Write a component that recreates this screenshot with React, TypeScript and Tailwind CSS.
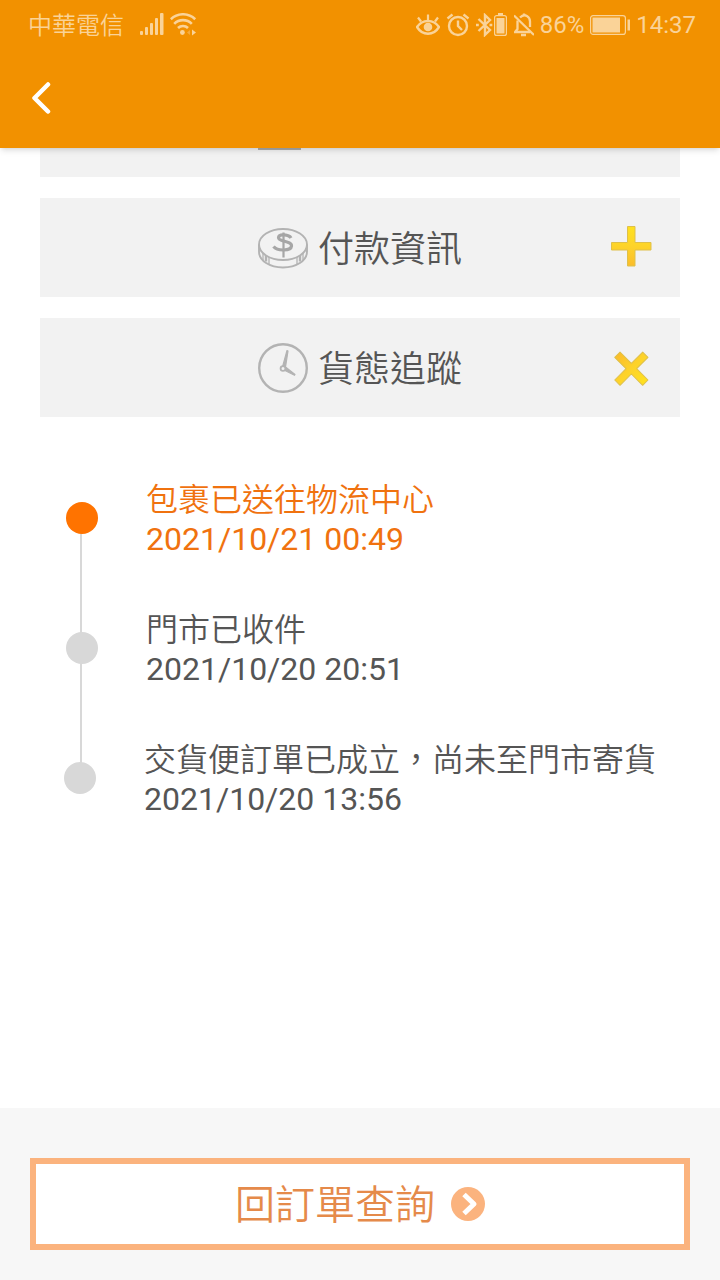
import React from 'react';

const sans = "font-[Roboto,'Noto_Sans_CJK_TC',sans-serif]";

interface TrackingEvent {
    title: string;
    time: string;
}

const events: TrackingEvent[] = [
    { title: '包裹已送往物流中心', time: '2021/10/21 00:49' },
    { title: '門市已收件', time: '2021/10/20 20:51' },
    { title: '交貨便訂單已成立，尚未至門市寄貨', time: '2021/10/20 13:56' },
];

const SignalIcon = () => (
    <svg className="h-6 w-6" viewBox="0 0 24 24" fill="currentColor">
        <rect x="0" y="18" width="3" height="4" rx="1" />
        <rect x="5" y="14" width="3" height="8" rx="1" />
        <rect x="10" y="10" width="3" height="12" rx="1" />
        <rect x="15" y="5" width="3" height="17" rx="1" />
        <rect x="20" y="0" width="3.5" height="22" rx="1" />
    </svg>
);

const WifiIcon = () => (
    <svg className="h-6 w-7" viewBox="0 0 28 24" fill="none" stroke="currentColor" strokeWidth="2.6">
        <path d="M.8 6.200a17.6 17.6 0 0 1 24.4 0" />
        <path d="M4.2 10.800a12.4 12.4 0 0 1 17.6 0" />
        <path d="M8 15a7.2 7.2 0 0 1 10 0" />
        <circle cx="12.4" cy="19.500" r="2.4" fill="currentColor" stroke="none" />
        <path d="M20 17v5l-3-2.500z" fill="currentColor" stroke="none" opacity=".4" />
        <path d="M22 16.500v6l4-3z" fill="currentColor" stroke="none" />
    </svg>
);

const EyeIcon = () => (
    <svg className="h-6 w-6" viewBox="0 0 24 24" fill="none" stroke="currentColor" strokeWidth="2.4">
        <path d="M1 14c5.500-8 16.500-8 22 0-5.500 9-16.500 9-22 0z" />
        <circle cx="12" cy="14" r="4.300" fill="currentColor" stroke="none" />
        <path d="M12 8V1.500M5 8.500 2 4.500M19 8.500l3-4" strokeWidth="2.200" />
    </svg>
);

const AlarmIcon = () => (
    <svg className="h-6 w-6" viewBox="0 0 24 24" fill="none" stroke="currentColor" strokeWidth="2.4">
        <circle cx="12" cy="13" r="9" />
        <path d="M12 7.500V13l4 4M1.500 5.500l5-4M22.500 5.500l-5-4" />
    </svg>
);

const BluetoothIcon = () => (
    <svg className="h-6 w-8" viewBox="0 0 32 24" fill="none" stroke="currentColor" strokeWidth="2.4">
        <path d="m2.500 6 11.500 11-5 4.800V2.200L14 7 2.500 18" />
        <path d="M0 12h2.800M13.500 12h2.800" strokeWidth="2.600" />
        <rect x="18.600" y="2.600" width="11.800" height="19.800" rx="2" strokeWidth="1.200" />
        <path d="M22 1h5" strokeWidth="2" />
        <rect x="20.500" y="5" width="8" height="15.500" fill="currentColor" stroke="none" />
    </svg>
);

const BellOffIcon = () => (
    <svg className="h-6 w-5" viewBox="2 0 20 24" fill="none" stroke="currentColor" strokeWidth="2.3">
        <path d="m2 2.500 20 19.500" />
        <path d="M5.500 7.500V16l-2.500 3H18M8 4.500C13-.5 18 4 18 8.500V14" />
        <path d="M12 3V.5M9 22h5" />
    </svg>
);

const BatteryIcon = () => (
    <svg className="h-6 w-10" viewBox="0 0 40 24" fill="currentColor">
        <rect x="0.600" y="2.600" width="34.800" height="18.800" rx="2.500" fill="none" stroke="currentColor" strokeWidth="1.200" />
        <rect x="2.500" y="4.500" width="27.500" height="15" />
        <path d="M37.500 6.500h2.500v11h-2.500z" />
    </svg>
);

const CoinIcon = () => (
    <svg className="h-[50px] w-[50px]" viewBox="0 0 50 50" fill="none" stroke="#b3b3b3" strokeWidth="1.9">
        <ellipse cx="25" cy="21.500" rx="24" ry="15.500" />
        <path d="M1 21.500v7C1 38 12 44.500 25 44.500S49 38 49 28.500v-7" />
        <path d="M5 30v7M11 34v7M39 34v7M45 30v7" strokeWidth="1.300" />
        <path d="M8 32.500v6M42 32.500v6" strokeWidth="2.400" />
        <path d="M33 15c-2-3.500-12-4.500-12.500-.5-.5 4.500 13.500 3 13 8.500-.5 5-14 5.500-18 .5" stroke="#a6a6a6" strokeWidth="3.200" />
        <path d="M25.500 9.500v25" stroke="#a6a6a6" strokeWidth="2.200" />
    </svg>
);

const ClockIcon = () => (
    <svg className="h-[50px] w-[50px]" viewBox="0 0 50 50" fill="none" stroke="#b3b3b3">
        <circle cx="25" cy="25" r="23.800" strokeWidth="2.400" />
        <path d="m24.500 24 4.500-16.500 1 .5-2.500 16 9.500 7.500-.5.800-10.500-5.300z" fill="#b3b3b3" strokeWidth="1.200" strokeLinejoin="round" />
        <circle cx="25" cy="25.500" r="2.400" fill="#f2f2f2" strokeWidth="1.800" />
    </svg>
);

const PlusIcon = () => (
    <svg className="mb-1 h-[42px] w-[42px]" viewBox="0 0 42 42">
        <defs>
            <linearGradient id="plusFill" x1="0" y1="0" x2="0" y2="1">
                <stop offset="0" stopColor="#ffe11f" />
                <stop offset=".5" stopColor="#fdd32a" />
                <stop offset="1" stopColor="#fbbd2b" />
            </linearGradient>
        </defs>
        <path
            d="M17.500 1.500h7.500v16h16v7.500H25v16h-7.500V25h-16v-7.500h16z"
            fill="url(#plusFill)"
            stroke="#dfc04a"
            strokeLinejoin="round"
        />
    </svg>
);

const CrossIcon = () => (
    <svg className="h-[42px] w-[42px]" viewBox="0 0 42 42">
        <defs>
            <linearGradient id="crossFill" x1="0" y1="0" x2="1" y2="0">
                <stop offset="0" stopColor="#fbbd2b" />
                <stop offset=".5" stopColor="#fdd32a" />
                <stop offset="1" stopColor="#ffe11f" />
            </linearGradient>
        </defs>
        <path
            d="M18 1.500h7.500v16h16v7.500h-16v16H18V25H2v-7.500h16z"
            transform="rotate(45 21 21)"
            fill="url(#crossFill)"
            stroke="#dfc04a"
            strokeLinejoin="round"
        />
    </svg>
);

interface SectionButtonProps {
    icon: React.ReactNode;
    label: string;
    isOpen?: boolean;
}

const SectionButton: React.FC<SectionButtonProps> = ({ icon, label, isOpen = false }) => (
    <button
        type="button"
        aria-expanded={isOpen}
        className="grid h-[99px] w-full grid-cols-[1fr_auto_1fr] items-center bg-[#f2f2f2] text-[#555]"
    >
        <span className="col-start-2 flex items-center gap-2.5">
            {icon}
            <span className="pt-1 text-4xl font-[350]">{label}</span>
        </span>
        <span className="justify-self-end pr-7">{isOpen ? <CrossIcon /> : <PlusIcon />}</span>
    </button>
);

const StatusBar = () => (
    <div className="flex h-[50px] items-center justify-between pr-6 pl-7 text-2xl text-[#fad398]">
        <div className="flex items-center gap-1.5">
            <span className="mr-2.5 pt-0.5 font-[350]">中華電信</span>
            <SignalIcon />
            <WifiIcon />
        </div>
        <div className="flex items-center gap-1.5">
            <EyeIcon />
            <AlarmIcon />
            <BluetoothIcon />
            <BellOffIcon />
            <span>86%</span>
            <BatteryIcon />
            <span>14:37</span>
        </div>
    </div>
);

const App: React.FC = () => {
    return (
        <div lang="zh-TW" className={`flex min-h-screen flex-col bg-white ${sans}`}>
            <header className="z-10 h-[148px] bg-[#f29100] shadow-md">
                <StatusBar />
                <button type="button" aria-label="返回" className="flex h-24 w-20 items-center pl-8">
                    <svg className="h-8 w-5" viewBox="0 0 20 32" fill="none" stroke="#fff" strokeWidth="4.500" strokeLinecap="round" strokeLinejoin="round">
                        <path d="M16 2.500 2.500 16 16 29.500" />
                    </svg>
                </button>
            </header>

            <main className="flex flex-col px-10">
                <div className="flex flex-col gap-[21px]">
                    {/* section scrolled under the header */}
                    <div className="h-[29px] bg-[#f2f2f2] pl-[218px]">
                        <div className="h-0.5 w-[43px] bg-[#aaa]" />
                    </div>
                    <SectionButton icon={<CoinIcon />} label="付款資訊" />
                    <SectionButton icon={<ClockIcon />} label="貨態追蹤" isOpen />
                </div>

                <ol className="mt-[101px] ml-10">
                    {events.map((event, index) => (
                        <li
                            key={event.time}
                            className={`flex h-[130px] items-start border-[#d8d8d8] ${index < events.length - 1 ? 'border-l-2' : ''}`}
                        >
                            <span
                                className={`-mt-4 -ml-4 h-8 w-8 shrink-0 rounded-full ${index === 0 ? 'bg-[#ff7300]' : 'bg-[#d8d8d8]'}`}
                            />
                            <div
                                className={`-mt-[39px] ml-12 text-[32px] ${index === 0 ? 'text-[#f0720f]' : 'text-[#555]'}`}
                            >
                                <p className="leading-[42px] font-[350] whitespace-nowrap">{event.title}</p>
                                <time className="block leading-9">{event.time}</time>
                            </div>
                        </li>
                    ))}
                </ol>
            </main>

            <footer className="mt-auto bg-[#f7f7f7] px-[30px] pt-[50px] pb-[30px]">
                <button
                    type="button"
                    className="flex h-[92px] w-full items-center justify-center gap-4 border-6 border-[#fbb37e] bg-white text-[40px] font-[350] text-[#e58a4a]"
                >
                    <span className="pt-1">回訂單查詢</span>
                    <svg className="h-[34px] w-[34px]" viewBox="0 0 34 34" fill="none">
                        <circle cx="17" cy="17" r="17" fill="#fbb37e" />
                        <path d="m13 7.500 10 9.500-10 9.500" stroke="#fff" strokeWidth="5" strokeLinejoin="round" />
                    </svg>
                </button>
            </footer>
        </div>
    );
};

export default App;
